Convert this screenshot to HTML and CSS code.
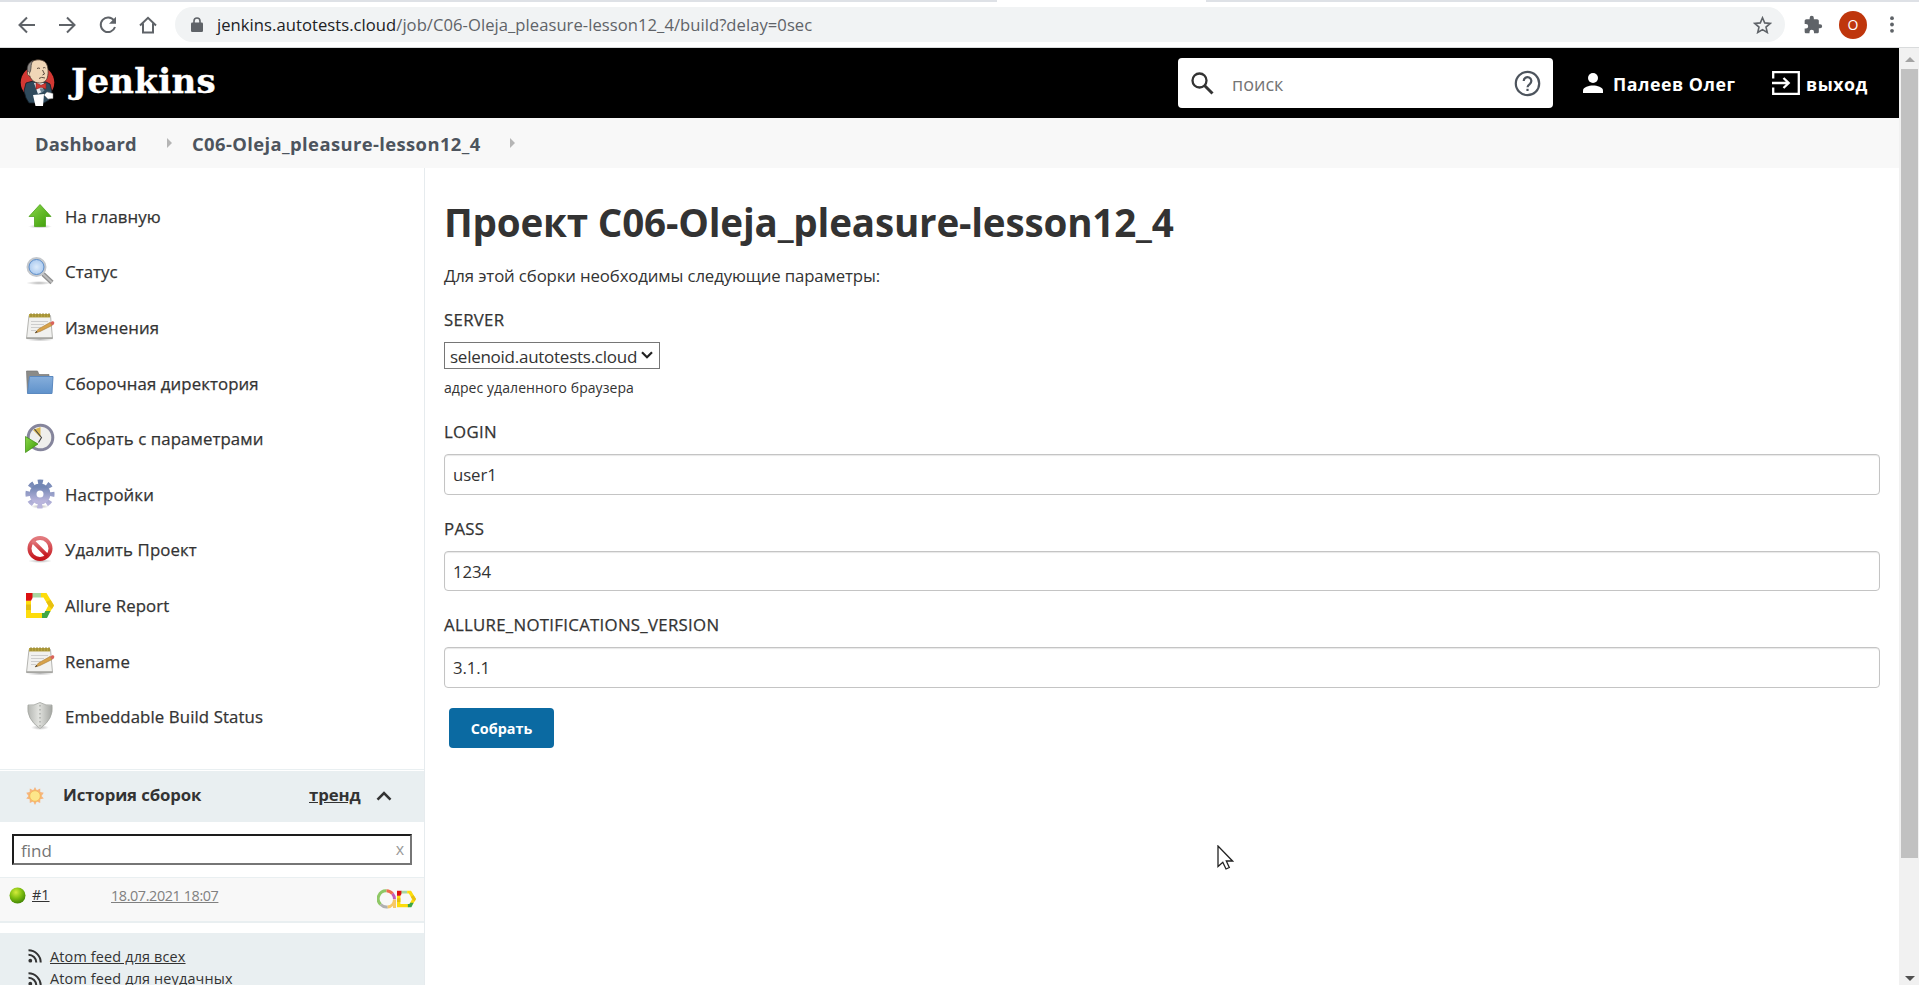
FILE: index.html
```html
<!DOCTYPE html>
<html lang="ru">
<head>
<meta charset="utf-8">
<title>Jenkins</title>
<link rel="stylesheet" href="styles.css">
</head>
<body>
<svg class="defs" width="0" height="0">
  <defs>
    <linearGradient id="green" x1="0" y1="0" x2="1" y2="1"><stop offset="0" stop-color="#8bd84a"/><stop offset="1" stop-color="#3a9a06"/></linearGradient>
    <linearGradient id="blue" x1="0" y1="0" x2="0" y2="1"><stop offset="0" stop-color="#86aedb"/><stop offset="1" stop-color="#5f92cb"/></linearGradient>
    <linearGradient id="gear" x1="0" y1="0" x2="0" y2="1"><stop offset="0" stop-color="#7387b4"/><stop offset="1" stop-color="#b9b5dc"/></linearGradient>
    <linearGradient id="red" x1="0" y1="0" x2="0" y2="1"><stop offset="0" stop-color="#e27a7e"/><stop offset="1" stop-color="#c5161d"/></linearGradient>
    <linearGradient id="steel" x1="0" y1="0" x2="1" y2="0"><stop offset="0" stop-color="#b4b6b2"/><stop offset=".45" stop-color="#e2e3df"/><stop offset="1" stop-color="#a3a5a1"/></linearGradient>
    <radialGradient id="ball" cx=".4" cy=".3" r=".75"><stop offset="0" stop-color="#d4ec3c"/><stop offset=".5" stop-color="#7fbf10"/><stop offset="1" stop-color="#3c8003"/></radialGradient>
    <radialGradient id="lens"><stop offset="0" stop-color="#dcebfb"/><stop offset="1" stop-color="#a5c6ee"/></radialGradient>
    <radialGradient id="shade"><stop offset="0" stop-color="#000" stop-opacity=".28"/><stop offset="1" stop-color="#000" stop-opacity="0"/></radialGradient>
    <symbol id="notepad" viewBox="0 0 30 30">
      <ellipse cx="15" cy="27.500" rx="14" ry="2" fill="url(#shade)"/>
      <path d="M4 3.500h21.500l2 23H1.500z" fill="#f1f1ef" stroke="#b5b5b1"/>
      <path d="M1.500 26h26" stroke="#a2a29e" stroke-width="1.500"/>
      <path d="M4 2h21v3.500H4z" fill="#b6a342"/>
      <path d="M6 1v4M9 1v4M12 1v4M15 1v4M18 1v4M21 1v4M24 1v4" stroke="#8d7c2b" stroke-width=".8"/>
      <path d="M6 9.500h17M6 12.500h13M6 15.500h10M6 18.500h5" stroke="#cdcdcd"/>
      <path d="M10 21l3.500-4L25 10.500l2 3L15 19.500z" fill="#d7a24a" stroke="#a97a34" stroke-width=".6"/>
      <path d="M25 10.500l3-1.500q2 1 1 3.200l-2 1.300z" fill="#d9645b"/>
      <path d="M10 21l1.500-2 1 1.300z" fill="#333"/>
    </symbol>
    <symbol id="rss" viewBox="0 0 14 14">
      <circle cx="2.300" cy="11.700" r="1.900" fill="#333"/>
      <path d="M.5 5.700a7.800 7.800 0 0 1 7.800 7.800M.5 1.300a12.200 12.200 0 0 1 12.200 12.200" fill="none" stroke="#333" stroke-width="2"/>
    </symbol>
    <symbol id="allure" viewBox="0 0 28 25">
      <path d="M0 7.500h5V20h12v5H0z" fill="#fddc0c"/>
      <path d="M0 11.500h5V17H0z" fill="#e3bd10"/>
      <path d="M6 0h9v4.500H6z" fill="#a9d6a0"/>
      <path d="M0 0h6.500v5L5 7.800H0z" fill="#dc1010"/>
      <path d="M15 0h5.500L28 12.500 24 19h-5l3.300-6.500L17.500 4.500H15z" fill="#fddc0c"/>
      <path d="M24.500 6.800L28 12.500l-2 3.500-3.700-3.500-2-3.400z" fill="#e8c010"/>
      <path d="M16 25v-5h2.300l1-2h5.200L21 25z" fill="#3fa743"/>
    </symbol>
  </defs>
</svg>

<div class="browser">
  <div class="tab-edge"><span class="tab-active"></span></div>
  <div class="toolbar">
    <div class="nav">
      <svg width="18" height="18" viewBox="0 0 18 18"><path d="M17 9H2M9 1.500L1.500 9 9 16.500"/></svg>
      <svg width="18" height="18" viewBox="0 0 18 18"><path d="M1 9h15M9 1.500L16.500 9 9 16.500"/></svg>
      <svg width="18" height="18" viewBox="0 0 18 18"><path d="M15 4.500A7.300 7.300 0 1 0 16 11"/><path class="solid" d="M17 .8v7h-7z"/></svg>
      <svg width="18" height="18" viewBox="0 0 18 18"><path d="M1 9.500L9 1.800l8 7.700M4 7.500v9h10v-9"/></svg>
    </div>
    <div class="address">
      <svg width="12" height="15" viewBox="0 0 12 15"><path d="M3 6V4a3 3 0 0 1 6 0v2" fill="none" stroke="#5f6368" stroke-width="1.600"/><rect y="5.500" width="12" height="9.500" rx="1.300" fill="#5f6368"/></svg>
      <span class="url"><span class="host">jenkins.autotests.cloud</span>/job/C06-Oleja_pleasure-lesson12_4/build?delay=0sec</span>
      <svg class="star" width="19" height="18" viewBox="0 0 19 18"><path d="M9.500 1.800l2.200 5.100 5.500.5-4.200 3.700 1.300 5.400-4.800-2.900-4.800 2.900L6 11.100 1.800 7.400l5.500-.5z" fill="none" stroke="#5f6368" stroke-width="1.600"/></svg>
    </div>
    <svg class="puzzle" width="20" height="20" viewBox="0 0 24 24"><path fill="#5f6368" d="M20.500 11H19V7c0-1.100-.9-2-2-2h-4V3.500a2.500 2.500 0 0 0-5 0V5H4c-1.100 0-2 .9-2 2v3.800h1.500a2.700 2.700 0 0 1 0 5.400H2V20c0 1.100.9 2 2 2h3.800v-1.500a2.700 2.700 0 0 1 5.400 0V22H17c1.100 0 2-.9 2-2v-4h1.500a2.500 2.500 0 0 0 0-5z"/></svg>
    <span class="avatar">O</span>
    <svg class="dots" width="4" height="17" viewBox="0 0 4 17"><circle cx="2" cy="2.200" r="1.900"/><circle cx="2" cy="8.500" r="1.900"/><circle cx="2" cy="14.800" r="1.900"/></svg>
  </div>
</div>

<div class="viewport">
  <div class="page">
    <header class="header">
      <svg class="butler" width="35" height="48" viewBox="0 0 35 48">
        <ellipse cx="17.500" cy="23.500" rx="16.800" ry="16.500" fill="#d33833"/>
        <path d="M6 24l7-2 13 1 4 2 2 8-3 8-5 3H9l-3-5-2-7z" fill="#2f4a5c" stroke="#111c24" stroke-width=".8"/>
        <path d="M14 24l10 0-2 9-4 2z" fill="#e9eef2"/>
        <path d="M9 6c3-6 13-7 17-2 2.500 4 2.500 10 1.500 14-1 4-4 6-8 6-6 0-9-4-10.500-9z" fill="#f0d6b7" stroke="#4b3a30" stroke-width=".8"/>
        <path d="M8.500 16C5.500 9 8 3.500 13 1.500 10.500 5 11.500 8 10.500 12z" fill="#8f8a86" stroke="#3c3836" stroke-width=".7"/>
        <path d="M8.500 12.500q-2 .5-.8 3 1 2 2.500 1.500" fill="#f0d6b7" stroke="#4b3a30" stroke-width=".7"/>
        <path d="M17 9.500q2-1 3 0M23 9q1.500-1 2.500 0M22.500 11l2 4-2 1M19 19.500q2-2 6-.5" fill="none" stroke="#4b3a30" stroke-width=".9"/>
        <path d="M16 24l5 2.200 5-2.200v6l-5-1.800-5 2z" fill="#d33833" stroke="#81211e" stroke-width=".6"/>
        <path d="M19.500 29.500q4-1 5 2l-3 2.500z" fill="#6f8796"/>
        <path d="M13 36l11-1-1 12H15.500z" fill="#fff"/>
        <path d="M24 36l3-3 6 1.500v5l-5 .5z" fill="#fff" stroke="#888" stroke-width=".5"/>
      </svg>
      <span class="brand">Jenkins</span>
      <div class="search">
        <svg width="23" height="23" viewBox="0 0 23 23"><circle cx="8.500" cy="8.500" r="7" fill="none" stroke="#333" stroke-width="2.300"/><path d="M13.500 13.500l8 8" stroke="#333" stroke-width="3"/></svg>
        <span class="search-text">поиск</span>
        <svg width="27" height="27" viewBox="0 0 27 27" fill="none" stroke="#4d545d" stroke-width="2.200"><circle cx="13.500" cy="13.500" r="11.700"/><path d="M9.700 11a3.800 3.800 0 1 1 6.200 2.900c-1.500 1.100-2.400 1.700-2.400 3.300"/><path d="M13.500 18.800v2.200"/></svg>
      </div>
      <svg class="person" width="20" height="20" viewBox="0 0 20 20" fill="#fff"><circle cx="10" cy="5" r="5"/><path d="M0 20v-2.500C0 14 6 12.500 10 12.500s10 1.500 10 5V20z"/></svg>
      <span class="user">Палеев Олег</span>
      <svg class="exit" width="28" height="24" viewBox="0 0 28 24" fill="none" stroke="#fff" stroke-width="2.300"><path d="M1.200 7.500V1.200h25.600v21.600H1.200v-6.300M0 12h16M11.500 7l5.200 5-5.200 5"/></svg>
      <span class="logout">выход</span>
    </header>

    <nav class="crumbs">
      <span class="crumb-a">Dashboard</span><i class="tri"></i><span class="crumb-b">C06-Oleja_pleasure-lesson12_4</span><i class="tri"></i>
    </nav>

    <div class="body">
      <aside class="side">
        <ul class="tasks">
          <li><svg viewBox="0 0 30 30"><ellipse cx="15" cy="25.500" rx="12" ry="2" fill="url(#shade)"/><path d="M15 3.500L26 15.500h-5.500v10h-11v-10H4z" fill="url(#green)" stroke="#4da51b" stroke-width=".8"/></svg><span>На главную</span></li>
          <li><svg viewBox="0 0 30 30"><ellipse cx="14" cy="27" rx="13" ry="2" fill="url(#shade)"/><path d="M18 18l9 8.500" stroke="#8f8f8f" stroke-width="4.500"/><path d="M18 18l9 8.500" stroke="#bdbdbd" stroke-width="2"/><circle cx="11.500" cy="11" r="8.700" fill="url(#lens)" stroke="#c3c7cc" stroke-width="2.600"/><circle cx="11.500" cy="11" r="7.500" fill="none" stroke="#5d8fcc" stroke-width="1"/></svg><span>Статус</span></li>
          <li><svg><use href="#notepad"/></svg><span>Изменения</span></li>
          <li><svg viewBox="0 0 30 30"><path d="M1.500 3h11l1.500 3.500h10V12h-20v13H2.500z" fill="#8b8b88" stroke="#777" stroke-width=".7"/><path d="M4.500 8.500h23.500l-1 17H2.500z" fill="url(#blue)" stroke="#5b89c0"/></svg><span>Сборочная директория</span></li>
          <li><svg viewBox="0 0 30 30"><circle cx="15.500" cy="14.500" r="12.300" fill="#efefec" stroke="#85859c" stroke-width="3"/><path d="M15.500 14.500L8 7l7.500-3z" fill="#d9b64e"/><path d="M9.500 6l7 8.500-3 5" fill="none" stroke="#444" stroke-width="1.100"/><path d="M.5 13.500L13 21 .5 29.500z" fill="url(#green)" stroke="#398a0b" stroke-width=".7"/></svg><span>Собрать с параметрами</span></li>
          <li><svg viewBox="0 0 30 30"><ellipse cx="15" cy="27.500" rx="9" ry="2" fill="url(#shade)"/><circle cx="15" cy="15" r="11.800" fill="none" stroke="url(#gear)" stroke-width="5.500" stroke-dasharray="4.900 4.367" stroke-dashoffset="2.450"/><circle cx="15" cy="15" r="7" fill="none" stroke="url(#gear)" stroke-width="7"/></svg><span>Настройки</span></li>
          <li><svg viewBox="0 0 30 30"><ellipse cx="15" cy="27" rx="12" ry="2" fill="url(#shade)"/><g fill="none" stroke="url(#red)" stroke-width="4"><circle cx="15" cy="14.500" r="10.500"/><path d="M7.700 7.200l14.600 14.600"/></g></svg><span>Удалить Проект</span></li>
          <li><svg viewBox="0 0 30 30"><use href="#allure" x="1" y="3" width="28" height="25"/></svg><span>Allure Report</span></li>
          <li><svg><use href="#notepad"/></svg><span>Rename</span></li>
          <li><svg viewBox="0 0 30 30"><ellipse cx="15" cy="26.500" rx="9" ry="2.500" fill="url(#shade)"/><path d="M15 1.500Q21 5 27 4q2 14-12 23.500Q1 18 3 4q6 1 12-2.500z" fill="url(#steel)" stroke="#a2a4a0" stroke-width=".8"/><path d="M15 4v22" stroke="#a2a4a0" stroke-width="1.200" stroke-dasharray="1.500 2.500"/></svg><span>Embeddable Build Status</span></li>
        </ul>
        <section class="history">
          <div class="history-head">
            <svg width="18" height="18" viewBox="0 0 18 18"><path d="M9 0l1.800 3.200 3.400-1.600.1 3.500 3.500.6L15.500 9l2.300 2.500-3.500.8-.1 3.700-3.400-1.500L9 18l-1.800-3.500L3.800 16l-.1-3.700-3.500-.8L2.500 9 .2 5.700l3.500-.6.1-3.500 3.400 1.600z" fill="#f6b57c"/><circle cx="9" cy="9" r="5.300" fill="#fde68a" stroke="#f2b652" stroke-width=".8"/></svg>
            <span class="history-title">История сборок</span>
            <span class="trend">тренд</span>
            <svg class="chev" width="16" height="10" viewBox="0 0 16 10"><path d="M1.500 8.700L8 2.200l6.500 6.500" fill="none" stroke="#333" stroke-width="2.600"/></svg>
          </div>
          <div class="find"><span>find</span><span class="clear">x</span></div>
          <div class="build">
            <svg width="17" height="17" viewBox="0 0 17 17"><circle cx="8.500" cy="8.500" r="8" fill="url(#ball)"/></svg>
            <span class="num">#1</span><span class="date">18.07.2021 18:07</span>
            <svg class="report" width="39" height="20" viewBox="0 0 39 20"><g fill="none" stroke-width="3"><path d="M9.500 1.700a8 8 0 0 0-5.800 13.800" stroke="#8fc866"/><path d="M3.700 15.500a8 8 0 0 0 7 2.400" stroke="#b0b0b0"/><path d="M9.500 1.700a8 8 0 0 1 6 3" stroke="#f0694c"/><path d="M15.500 4.700a8 8 0 0 1 2 5.500" stroke="#c45ab5"/><path d="M10.700 18a8 8 0 0 0 6.800-7.500V19" stroke="#f7c866"/></g><use href="#allure" x="20" y="1.500" width="19" height="17"/></svg>
          </div>
          <div class="feeds">
            <div class="feed"><svg width="14" height="14"><use href="#rss"/></svg><span>Atom feed для всех</span></div>
            <div class="feed"><svg width="14" height="14"><use href="#rss"/></svg><span>Atom feed для неудачных</span></div>
          </div>
        </section>
      </aside>

      <main class="main">
        <h1>Проект C06-Oleja_pleasure-lesson12_4</h1>
        <p class="intro">Для этой сборки необходимы следующие параметры:</p>
        <div class="label l1">SERVER</div>
        <div class="select"><span class="opt">selenoid.autotests.cloud</span><svg width="12" height="8" viewBox="0 0 12 8"><path d="M1 1.200l5 5 5-5" fill="none" stroke="#222" stroke-width="2.200"/></svg></div>
        <div class="hint">адрес удаленного браузера</div>
        <div class="label l2">LOGIN</div>
        <div class="input">user1</div>
        <div class="label l3">PASS</div>
        <div class="input short">1234</div>
        <div class="label l4">ALLURE_NOTIFICATIONS_VERSION</div>
        <div class="input">3.1.1</div>
        <button class="submit">Собрать</button>
      </main>
    </div>
  </div>
  <div class="scroll">
    <i class="up"></i><i class="thumb"></i><i class="down"></i>
  </div>
</div>
<svg class="cursor" width="17" height="26" viewBox="0 0 17 26"><path d="M1 1v20.500l4.800-4.300 3.200 6.800 3.300-1.500-3-6.500h6.200z" fill="#fff" stroke="#222" stroke-width="1.300"/></svg>
</body>
</html>
```
FILE: styles.css
```css
* { box-sizing: border-box; }
html, body { margin: 0; height: 985px; overflow: hidden; }
body { font-family: "Open Sans", "Noto Sans", sans-serif; color: #333; background: #fff; font-size: 16.8px; white-space: nowrap; }
svg { display: block; flex: none; }
.defs { position: absolute; }

.browser { height: 48px; border-bottom: 1px solid #d9dbdc; }
.tab-edge { height: 2px; background: #dee1e6; display: flex; padding-left: 997px; }
.tab-active { width: 209px; background: #fff; }
.toolbar { height: 45px; display: flex; align-items: center; }
.nav { display: flex; gap: 22.3px; padding-left: 18px; width: 175px; }
.nav path { fill: none; stroke: #5f6368; stroke-width: 2; }
.nav .solid { fill: #5f6368; stroke: none; }
.address { width: 1610px; height: 35px; border-radius: 18px; background: #f1f3f4; display: flex; align-items: center; padding-left: 16px; }
.url { margin-left: 14px; color: #5f6368; font-size: 16.6px; letter-spacing: .05px; }
.host { color: #202124; }
.star { margin-left: auto; margin-right: 13px; }
.puzzle { margin-left: 18px; }
.avatar { width: 28px; height: 28px; border-radius: 50%; background: #bf360c; color: #fff; font-size: 14px; line-height: 28px; text-align: center; margin-left: 16px; }
.dots { margin-left: 23px; fill: #5f6368; }

.viewport { display: flex; height: 937px; }
.page { width: 1899px; overflow: hidden; }
.header { height: 70px; background: #000; color: #fff; display: flex; align-items: center; }
.butler { margin-left: 20px; }
.brand { font: bold 34px/70px "DejaVu Serif", serif; letter-spacing: .3px; -webkit-text-stroke: .4px #fff; width: 150px; margin-left: 16px; margin-top: -4px; }
.search { margin-left: 957px; width: 375px; height: 50px; background: #fff; border-radius: 4px; display: flex; align-items: center; padding: 0 12px 0 13px; }
.search-text { flex: 1; margin-left: 18px; color: #757575; font-size: 18px; line-height: 50px; padding-top: 2px; }
.person { margin-left: 30px; }
.user, .logout { font-weight: 700; font-size: 17.8px; letter-spacing: .5px; line-height: 68px; padding-top: 1px; }
.user { margin-left: 10px; width: 159px; }
.logout { margin-left: 6px; }

.crumbs { height: 50px; background: #f8f8f8; display: flex; align-items: center; padding-left: 35px; font-weight: 700; font-size: 18.4px; color: #4d545d; }
.crumb-a { width: 132px; letter-spacing: .2px; }
.crumb-b { width: 318px; margin-left: 20px; letter-spacing: .4px; }
.tri { border: 5px solid transparent; border-left-color: #b5b5b5; border-right: 0; }

.body { display: flex; height: 817px; }
.side { width: 425px; border-right: 1px solid #e6ebee; }
.tasks { list-style: none; margin: 0; padding: 20px 0 0 25px; height: 601px; font-weight: 500; letter-spacing: .1px; }
.tasks li { display: flex; align-items: center; height: 55.6px; }
.tasks span { padding-top: 1px; -webkit-text-stroke: .25px #333; }
.tasks svg { width: 30px; height: 30px; margin-right: 10px; }
.history { border-top: 1px solid #e9eff1; padding-top: 1px; }
.history-head { background: #e9eff1; height: 51px; display: flex; align-items: center; padding-left: 26px; font-weight: 700; letter-spacing: -.12px; }
.history-head span { margin-top: -4px; }
.history-head svg { margin-top: -1px; }
.history-title { margin-left: 19px; width: 246px; }
.trend { width: 67px; text-decoration: underline; }
.find { margin: 12px 12px 12px; height: 31px; border: 2px solid; border-color: #1d1d1d #767676 #767676 #1d1d1d; display: flex; justify-content: space-between; align-items: center; padding: 1px 6px 0 7px; color: #757575; font-size: 17px; }
.clear { font-size: 16px; color: #999; margin-top: -3px; }
.build { border-top: 1px solid #e9eff1; border-bottom: 2px solid #e9eff1; background: #f8f8f8; height: 46px; display: flex; padding-left: 9px; font-size: 14.400px; line-height: 35px; }
.build svg { margin-top: 9px; }
.build .report { margin-top: 11px; }
.num { margin-left: 6px; width: 79px; text-decoration: underline; line-height: 34px; }
.date { width: 265.500px; color: #808080; text-decoration: underline; letter-spacing: -.4px; }
.feeds { background: #e9eff1; margin-top: 10px; padding: 12px 0 0 28px; height: 60px; }
.feed { height: 22.500px; display: flex; align-items: center; font-size: 14.400px; letter-spacing: .17px; }
.feed span { margin-left: 8px; text-decoration: underline; }

.main { flex: 1; padding: 28px 19px 0; }
.main h1 { margin: 0; font-size: 38.600px; line-height: 52px; font-weight: 700; letter-spacing: -.18px; }
.intro { margin: 16px 0 0; line-height: 24px; letter-spacing: -.13px; }
.label { font-weight: 500; line-height: 24px; height: 24px; letter-spacing: .3px; -webkit-text-stroke: .25px #333; }
.l1 { margin-top: 20px; }
.select { margin-top: 10px; width: 216px; height: 27px; border: 1px solid #767676; display: flex; align-items: center; justify-content: space-between; padding: 2px 6px 0 5px; font-size: 17px; }
.select svg { margin-top: -3px; }
.opt { letter-spacing: -.26px; }
.hint { font-size: 14px; line-height: 20px; margin-top: 9px; letter-spacing: .07px; }
.l2 { margin-top: 22px; }
.input { margin-top: 10px; height: 41px; border: 1px solid #c4c4c4; border-radius: 4px; box-shadow: inset 0 1px 1px #e8e8e8; padding: 0 8px; line-height: 40px; letter-spacing: -.1px; }
.short { height: 40px; line-height: 39px; }
.l3, .l4 { margin-top: 22px; }
.submit { display: block; margin: 20px 0 0 5px; width: 105px; height: 40px; border: 0; border-radius: 4px; background: #0b6aa2; color: #fff; font: 700 14.400px "Open Sans", sans-serif; padding: 0; }

.scroll { width: 20px; background: #f1f1f1; padding: 9px 1px 0 2px; display: flex; flex-direction: column; align-items: center; }
.up { border: 5px solid transparent; border-bottom-color: #a3a3a3; border-top: 0; height: 5px; }
.thumb { width: 17px; height: 789px; background: #c1c1c1; margin-top: 7px; }
.down { border: 5px solid transparent; border-top-color: #505050; border-bottom: 0; margin-top: 118px; }
.cursor { position: absolute; left: 1217px; top: 845px; }
```
